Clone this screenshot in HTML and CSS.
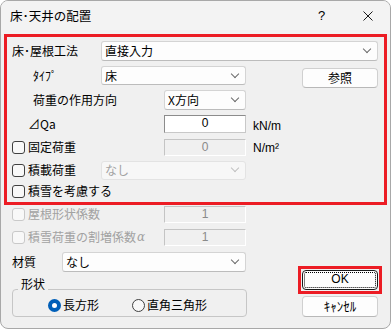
FILE: index.html
```html
<!DOCTYPE html>
<html lang="ja">
<head>
    <meta charset="UTF-8">
    <title>床･天井の配置</title>
    <link rel="stylesheet" href="styles.css">
</head>
<body>
    <div class="window">
        <div class="title-bar">
            <div class="title">床･天井の配置</div>
            <div class="help">?</div>
            <div class="close">
                <svg width="10" height="10" viewBox="0 0 10 10"><path d="M0.5 0.5 L9.5 9.5 M9.5 0.5 L0.5 9.5" stroke="#1a1a1a" stroke-width="1"/></svg>
            </div>
        </div>

        <!-- 上部の入力グループ -->
        <div class="group-red">
            <div class="row row-1">
                <div class="lbl lbl-a">床･屋根工法</div>
                <div class="combo w-wide"><span>直接入力</span><i class="chev"></i></div>
            </div>
            <div class="row row-2">
                <div class="lbl lbl-a indent">ﾀｲﾌﾟ</div>
                <div class="combo w-mid h19"><span>床</span><i class="chev"></i></div>
                <div class="btn btn-ref">参照</div>
            </div>
            <div class="row row-3">
                <div class="lbl lbl-b indent">荷重の作用方向</div>
                <div class="combo w-short"><span>X方向</span><i class="chev"></i></div>
            </div>
            <div class="row row-4">
                <div class="lbl lbl-b indent-q">⊿Qa</div>
                <div class="edit w-short">0</div>
                <div class="unit">kN/m</div>
            </div>
            <div class="row row-5">
                <div class="lbl lbl-b"><span class="check"></span>固定荷重</div>
                <div class="edit disabled w-short h17">0</div>
                <div class="unit">N/m²</div>
            </div>
            <div class="row row-6">
                <div class="lbl lbl-a"><span class="check"></span>積載荷重</div>
                <div class="combo disabled w-mid h19"><span>なし</span><i class="chev"></i></div>
            </div>
            <div class="row row-7">
                <div class="lbl"><span class="check"></span>積雪を考慮する</div>
            </div>
        </div>

        <div class="lower">
            <div class="lower-left">
                <div class="row row-8">
                    <div class="lbl lbl-b muted"><span class="check off"></span>屋根形状係数</div>
                    <div class="edit disabled w-short h17">1</div>
                </div>
                <div class="row row-9">
                    <div class="lbl lbl-b muted"><span class="check off"></span>積雪荷重の割増係数<em>α</em></div>
                    <div class="edit disabled w-short h17">1</div>
                </div>
                <div class="row row-10">
                    <div class="lbl lbl-c">材質</div>
                    <div class="combo w-mat"><span>なし</span><i class="chev"></i></div>
                </div>
                <fieldset class="shape">
                    <legend>形状</legend>
                    <div class="radios">
                        <div class="radio-item"><span class="radio on"></span>長方形</div>
                        <div class="radio-item second"><span class="radio"></span>直角三角形</div>
                    </div>
                </fieldset>
            </div>
            <div class="lower-right">
                <div class="ok-frame">
                    <div class="btn btn-ok">OK</div>
                </div>
                <div class="btn btn-cancel">ｷｬﾝｾﾙ</div>
            </div>
        </div>
    </div>
</body>
</html>
```

FILE: styles.css
```css
body {
    margin: 0;
    background-color: #ffffff;
    font-family: "Noto Sans CJK JP", "Noto Sans", sans-serif;
    font-size: 12px;
    color: #000000;
}

.window {
    width: 391px;
    height: 329px;
    box-sizing: border-box;
    border: 1px solid #a8a8a8;
    border-radius: 8px;
    background-color: #f0f0f0;
    overflow: hidden;
}

.title-bar {
    height: 33px;
    display: flex;
    align-items: flex-start;
    background-color: #f3f3f3;
}

.title {
    font-size: 12.5px;
    line-height: 14px;
    padding: 8px 0 0 9px;
    flex: 1;
}

.help {
    font-family: "Liberation Sans", sans-serif;
    font-size: 13px;
    line-height: 14px;
    padding-top: 8px;
    width: 10px;
}

.close {
    padding: 10px 17px 0 35px;
    line-height: 0;
}

/* 赤枠のグループ */
.group-red {
    margin-left: 3px;
    width: 383px;
    height: 171px;
    box-sizing: border-box;
    border: 3px solid #ec1c24;
    padding: 1px 0 2px 5px;
}

.row {
    display: flex;
    align-items: center;
}

.row-1 { height: 25px; }
.row-2 { height: 25px; }
.row-3 { height: 24px; }
.row-4 { height: 24px; }
.row-5 { height: 22px; }
.row-6 { height: 24px; }
.row-7 { height: 18px; }

.lbl {
    display: flex;
    align-items: center;
    flex: none;
    white-space: nowrap;
    line-height: 14px;
}

.lbl-a { width: 89px; }
.lbl-b { width: 152px; }
.lbl-c { width: 50px; }

.indent { padding-left: 21px; box-sizing: border-box; }
.indent-q { padding-left: 16px; box-sizing: border-box; }

.lbl em {
    font-family: "DejaVu Serif", serif;
    font-size: 12px;
    padding-left: 1px;
}

.check {
    width: 13px;
    height: 13px;
    box-sizing: border-box;
    border: 1px solid #404040;
    border-radius: 3px;
    background-color: #f8f8f8;
    margin-right: 3px;
    flex: none;
}

.check.off {
    border-color: #c9c9c9;
}

.muted {
    color: #a2a2a2;
}

.combo {
    height: 20px;
    box-sizing: border-box;
    border: 1px solid #d4d4d4;
    border-bottom-color: #bcbcbc;
    border-radius: 3px;
    background-color: #fdfdfd;
    display: flex;
    align-items: center;
    justify-content: space-between;
    padding: 0 7px 0 3px;
    line-height: 14px;
}

.combo.h19 { height: 19px; }

.combo.disabled {
    background-color: #f7f7f7;
    border-color: #e3e3e3;
    color: #a2a2a2;
}

.chev {
    width: 5px;
    height: 5px;
    border-right: 1px solid #6a6a6a;
    border-bottom: 1px solid #6a6a6a;
    transform: rotate(45deg);
    margin-top: -4px;
}

.combo.disabled .chev {
    border-color: #c0c0c0;
}

.w-wide { width: 277px; }
.w-mid { width: 145px; }
.w-short { width: 82px; }
.w-mat { width: 184px; }

.edit {
    height: 18px;
    box-sizing: border-box;
    border: 1px solid #8c8c8c;
    border-bottom-color: #c8c8c8;
    border-right-color: #c8c8c8;
    background-color: #ffffff;
    text-align: center;
    line-height: 15px;
    font-family: "Liberation Sans", sans-serif;
    font-size: 12px;
}

.edit.h17 { height: 17px; line-height: 14px; }

.edit.disabled {
    background-color: #f0f0f0;
    border-color: #c4c4c4;
    border-bottom-color: #ffffff;
    border-right-color: #ffffff;
    color: #8a8a8a;
}

.unit {
    margin-left: 7px;
    font-family: "Liberation Sans", sans-serif;
    font-size: 12px;
    padding-top: 4px;
}

.row-5 .unit { padding-top: 2px; }

.btn {
    box-sizing: border-box;
    border: 1px solid #d0d0d0;
    border-bottom-color: #b8b8b8;
    border-radius: 4px;
    background-color: #fdfdfd;
    text-align: center;
    line-height: 17px;
}

.btn-ref {
    width: 76px;
    height: 20px;
    margin: 4px 0 0 56px;
}

/* 下部 */
.lower {
    display: flex;
    padding-left: 11px;
}

.lower-left {
    width: 235px;
}

.row-8 { height: 18px; }
.row-9 { height: 22px; margin-top: 3px; }
.row-10 { height: 24px; margin-top: 2px; }

.shape {
    margin: 4px 0 0 0;
    padding: 0 0 6px 0;
    border: 1px solid #c6c6c6;
    border-radius: 4px;
    min-width: 0;
}

.shape legend {
    margin-left: 5px;
    padding: 0 3px 10px 3px;
    line-height: 12px;
}

.radios {
    display: flex;
    align-items: center;
    height: 10px;
    padding-left: 35px;
}

.radio-item {
    display: flex;
    align-items: center;
    line-height: 14px;
}

.radio-item.second {
    margin-left: 33px;
}

.radio {
    width: 13px;
    height: 13px;
    box-sizing: border-box;
    border: 1px solid #404040;
    border-radius: 50%;
    background-color: #f8f8f8;
    margin-right: 2px;
}

.radio.on {
    border: 4px solid #005fb8;
    background-color: #ffffff;
}

.lower-right {
    margin-left: 51px;
}

.ok-frame {
    margin-top: 61px;
    width: 84px;
    box-sizing: border-box;
    border: 3px solid #ec1c24;
    padding: 1px;
}

.btn-ok {
    width: 76px;
    height: 20px;
    border-color: #1a1a1a;
    outline: 1px dotted #000000;
    outline-offset: -3px;
    font-family: "Liberation Sans", sans-serif;
}

.btn-cancel {
    width: 76px;
    height: 21px;
    margin: 2px 0 0 4px;
    font-size: 13px;
    line-height: 18px;
}
```
